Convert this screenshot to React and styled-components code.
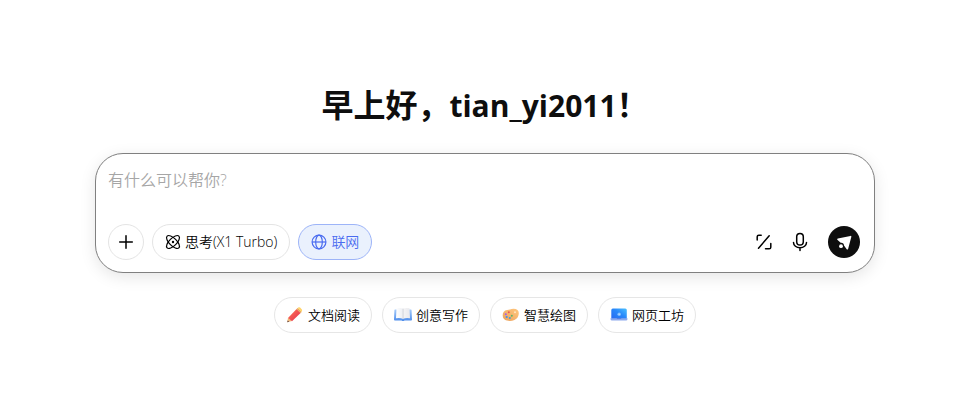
import React, { useState } from 'react';
import styled, { createGlobalStyle } from 'styled-components';

const App = () => {
  const [text, setText] = useState('');
  const [online, setOnline] = useState(true);

  return (
    <Page>
      <GlobalStyle />
      <Title>
        早上好，<UserName>tian_yi2011</UserName>！
      </Title>
      <Panel>
        <Input
          aria-label="有什么可以帮你?"
          placeholder="有什么可以帮你?"
          value={text}
          onChange={(e) => setText(e.target.value)}
        />
        <Toolbar>
          <Group>
            <RoundButton type="button" aria-label="添加">
              <PlusIcon />
            </RoundButton>
            <ToolButton type="button">
              <AtomIcon />
              思考(X1 Turbo)
            </ToolButton>
            <ToolButton
              type="button"
              $active={online}
              aria-pressed={online}
              onClick={() => setOnline(!online)}
            >
              <GlobeIcon />
              联网
            </ToolButton>
          </Group>
          <Actions>
            <IconButton type="button" aria-label="优化">
              <ExpandIcon />
            </IconButton>
            <IconButton type="button" aria-label="语音">
              <MicIcon />
            </IconButton>
            <SendButton type="button" aria-label="发送">
              <SendIcon />
            </SendButton>
          </Actions>
        </Toolbar>
      </Panel>
      <Shortcuts>
        <Shortcut type="button">
          <PencilIcon />
          文档阅读
        </Shortcut>
        <Shortcut type="button">
          <BookIcon />
          创意写作
        </Shortcut>
        <Shortcut type="button">
          <PaletteIcon />
          智慧绘图
        </Shortcut>
        <Shortcut type="button">
          <LaptopIcon />
          网页工坊
        </Shortcut>
      </Shortcuts>
    </Page>
  );
};

const PlusIcon = () => (
  <svg width="16" height="16" viewBox="0 0 16 16" aria-hidden="true">
    <path
      d="M8 1.7v12.6M1.7 8h12.6"
      stroke="currentColor"
      strokeWidth="1.5"
      strokeLinecap="round"
    />
  </svg>
);

const AtomIcon = () => (
  <svg
    width="16"
    height="16"
    viewBox="0 0 16 16"
    fill="none"
    stroke="currentColor"
    strokeWidth="1.2"
    aria-hidden="true"
  >
    <path d="M2.100 2.100C3.600.6 7.400 2.200 10.600 5.400s4.800 7 3.300 8.500-5.300-.1-8.500-3.300S.6 3.600 2.100 2.100z" />
    <path d="M13.900 2.100c1.500 1.500-.1 5.300-3.300 8.500s-7 4.800-8.500 3.300.1-5.300 3.300-8.500 7-4.800 8.500-3.300z" />
    <circle cx="8" cy="8" r="1.2" fill="currentColor" stroke="none" />
  </svg>
);

const GlobeIcon = () => (
  <svg
    width="16"
    height="16"
    viewBox="0 0 16 16"
    fill="none"
    stroke="currentColor"
    strokeWidth="1.2"
    aria-hidden="true"
  >
    <circle cx="8" cy="8" r="6.9" />
    <ellipse cx="8" cy="8" rx="3.3" ry="6.9" />
    <path d="M1 8h14" />
  </svg>
);

const ExpandIcon = () => (
  <svg
    width="16"
    height="16"
    viewBox="0 0 16 16"
    fill="none"
    stroke="currentColor"
    strokeWidth="1.5"
    strokeLinecap="round"
    strokeLinejoin="round"
    aria-hidden="true"
  >
    <path d="M1.2 6V2.8a1.6 1.6 0 0 1 1.6-1.6h2.4" />
    <path d="M14.8 9.5v3.7a1.6 1.6 0 0 1-1.6 1.6H9.5" />
    <path d="M13.2 1.8L2.5 14.2" />
  </svg>
);

const MicIcon = () => (
  <svg
    width="16"
    height="20"
    viewBox="0 0 16 20"
    fill="none"
    stroke="currentColor"
    strokeWidth="1.5"
    strokeLinecap="round"
    aria-hidden="true"
  >
    <rect x="4.7" y="1.5" width="6.6" height="11.5" rx="3.3" />
    <path d="M1.5 10.5a6.5 5.3 0 0 0 13 0M8 16v2.5" />
  </svg>
);

const SendIcon = () => (
  <svg width="16" height="16" viewBox="0 0 16 16" fill="#fff" aria-hidden="true">
    <path d="M14.400 1.900a.8.8 0 0 1 .9 1l-3.200 12.200a.8.8 0 0 1-1.400.2L8 11.600a3 3 0 0 0-3.300-2.800L1.600 6.100a.8.8 0 0 1 .3-1.500z" />
    <circle cx="5" cy="12.200" r="1.900" />
  </svg>
);

const PencilIcon = () => (
  <svg width="18" height="18" viewBox="0 0 18 18" aria-hidden="true">
    <defs>
      <linearGradient id="pencil" x1="0" y1="0" x2="1" y2="1">
        <stop offset="0" stopColor="#ff7a55" />
        <stop offset="1" stopColor="#e32c51" />
      </linearGradient>
    </defs>
    <path d="M2 11.800L1.300 16.300l4.500-1.200z" fill="#f0b978" />
    <path d="M1.600 14.400l-.3 1.900 2-.5z" fill="#594044" />
    <path d="M2 11.900L10.600 3.100l4 4-8.600 8.200z" fill="url(#pencil)" />
    <path d="M10.600 3.100l1.100-1.100 4 4-1.100 1.100z" fill="#e5a353" />
    <path d="M11.700 2l.4-.4q1-.9 2 0l1.600 1.700q1 1 0 2l-.3.600z" fill="#ffd36a" />
  </svg>
);

const BookIcon = () => (
  <svg width="18" height="18" viewBox="0 0 18 18" aria-hidden="true">
    <defs>
      <linearGradient id="cover" x1="0" y1="0" x2="0" y2="1">
        <stop offset="0" stopColor="#a5cbfa" />
        <stop offset="1" stopColor="#4e8deb" />
      </linearGradient>
      <linearGradient id="paper" x1="0" y1="0" x2="1" y2="0">
        <stop offset="0" stopColor="#fff" />
        <stop offset=".45" stopColor="#eef0f4" />
        <stop offset=".5" stopColor="#c4c7ce" />
        <stop offset=".56" stopColor="#f3f3f5" />
        <stop offset="1" stopColor="#e9e9ed" />
      </linearGradient>
    </defs>
    <path
      d="M1 3.500h16q.5 0 .6.700l.4 9.200q0 1-.9 1H10.500q-1.500 1-3 0H.9q-.9 0-.9-1L.4 4.200q.1-.7.600-.7z"
      fill="url(#cover)"
    />
    <path
      d="M2.500 2.300Q6.500 1.400 9 2.800 11.500 1.400 15.500 2.300l.5 9.900Q11.500 11.400 9 13 6.500 11.400 2 12.200z"
      fill="url(#paper)"
    />
  </svg>
);

const PaletteIcon = () => (
  <svg width="18" height="18" viewBox="0 0 18 18" aria-hidden="true">
    <defs>
      <linearGradient id="palette" x1="1" y1="0" x2="0" y2="1">
        <stop offset="0" stopColor="#ffc77e" />
        <stop offset="1" stopColor="#eba25d" />
      </linearGradient>
    </defs>
    <path
      d="M8 3.600q1.500-.8 3.500-.8 5.300 0 5.300 4.500 0 4.600-4.300 6.600-3.500 1.500-7.500.7Q.8 13.700.7 9.500.6 4.600 5.200 3.900q1.500-.3 2.800-.3z"
      fill="url(#palette)"
    />
    <circle cx="13" cy="6.200" r="1" fill="#ffe6bd" />
    <circle cx="6.800" cy="6.200" r="1" fill="#ee554d" />
    <circle cx="3.800" cy="8.200" r="1" fill="#a65ee7" />
    <circle cx="4.700" cy="11" r="1.100" fill="#438dee" />
    <circle cx="7.800" cy="12" r="1" fill="#3ba0d8" />
    <circle cx="9.800" cy="9.700" r="1" fill="#5bb968" />
  </svg>
);

const LaptopIcon = () => (
  <svg width="18" height="18" viewBox="0 0 18 18" aria-hidden="true">
    <defs>
      <linearGradient id="screen" x1="0" y1="1" x2="1" y2="0">
        <stop offset="0" stopColor="#2867f0" />
        <stop offset=".55" stopColor="#2a88fa" />
        <stop offset="1" stopColor="#4bc1ff" />
      </linearGradient>
    </defs>
    <rect x="1.300" y="2.500" width="15.500" height="11" rx="1.500" fill="url(#screen)" />
    <circle cx="9.200" cy="8.300" r="1.800" fill="#7dbbff" />
    <circle cx="9.200" cy="8.300" r=".8" fill="#b9dcff" />
    <path d="M.5 12.200h17v.8q0 1.500-1.500 1.500H2q-1.500 0-1.500-1.500z" fill="#8da9ed" />
    <path d="M6.500 12.200h5l-.7.900H7.200z" fill="#5279dc" />
  </svg>
);

const GlobalStyle = createGlobalStyle`
  * {
    box-sizing: border-box;
  }
  body {
    margin: 0;
    background: #fff;
    color: #0e0e0e;
    font-family: 'Open Sans', 'Noto Sans CJK SC', sans-serif;
  }
  button,
  textarea {
    font-family: inherit;
    font-weight: 350;
  }
`;

const Page = styled.main`
  display: flex;
  flex-direction: column;
  align-items: center;
  padding: 81px 16px 32px 21px;
`;

const Title = styled.h1`
  margin: 0 0 24px;
  font-size: 32px;
  font-weight: 700;
  line-height: 48px;
`;

const UserName = styled.span`
  font-size: 30px;
  line-height: 1;
`;

const Panel = styled.section`
  width: 100%;
  max-width: 780px;
  padding: 12px 14px 12px 12px;
  border: 1px solid #808080;
  border-radius: 28px;
  background: #fff;
  box-shadow: 0 4px 16px rgba(0, 0, 0, 0.1);
`;

const Input = styled.textarea`
  display: block;
  width: 100%;
  height: 52px;
  margin-bottom: 6px;
  padding: 0;
  border: 0;
  outline: 0;
  resize: none;
  background: transparent;
  color: inherit;
  font-size: 16px;
  line-height: 28px;
  &::placeholder {
    color: #a6a6a6;
    opacity: 1;
  }
`;

const Toolbar = styled.div`
  display: flex;
  align-items: center;
  justify-content: space-between;
`;

const Group = styled.div`
  display: flex;
  gap: 8px;
`;

const Actions = styled.div`
  display: flex;
  align-items: center;
  gap: 20px;
`;

const Button = styled.button`
  display: flex;
  align-items: center;
  justify-content: center;
  padding: 0;
  border: 0;
  background: transparent;
  color: #000;
  cursor: pointer;
  svg {
    flex-shrink: 0;
  }
`;

const RoundButton = styled(Button)`
  width: 36px;
  height: 36px;
  border: 1px solid #e4e4e4;
  border-radius: 50%;
`;

const ToolButton = styled(Button)`
  gap: 4px;
  height: 36px;
  padding: 0 12px;
  border: 1px solid ${({ $active }) => ($active ? '#9db4f8' : '#e4e4e4')};
  border-radius: 18px;
  background: ${({ $active }) => ($active ? '#eaf1fd' : '#fff')};
  color: ${({ $active }) => ($active ? '#4a6cf0' : '#000')};
  font-size: 14px;
  line-height: 20px;
  white-space: nowrap;
`;

const IconButton = styled(Button)`
  width: 16px;
  height: 20px;
`;

const SendButton = styled(Button)`
  width: 32px;
  height: 32px;
  border-radius: 50%;
  background: #0e0e0e;
`;

const Shortcuts = styled.nav`
  display: flex;
  flex-wrap: wrap;
  justify-content: center;
  gap: 10px;
  margin-top: 24px;
`;

const Shortcut = styled(Button)`
  gap: 4px;
  height: 36px;
  padding: 0 11px;
  border: 1px solid #e6e6e6;
  border-radius: 18px;
  font-size: 13px;
  line-height: 20px;
  white-space: nowrap;
`;

export default App;
